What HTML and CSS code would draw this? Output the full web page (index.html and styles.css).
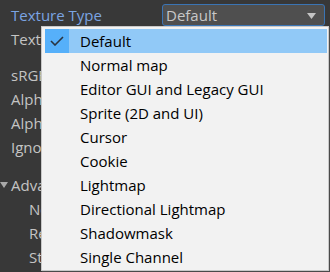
FILE: index.html
```html
<!DOCTYPE html>
<html>
<head>
<meta charset="utf-8">
<link rel="stylesheet" href="styles.css">
</head>
<body>
<div class="inspector">
  <div class="row">
    <span class="label focused">Texture Type</span>
    <div class="popup">
      <span>Default</span>
      <svg class="arrow" width="9" height="6" viewBox="0 0 9 6"><polygon points="0,0 9,0 4.5,6" fill="#c4c4c4"/></svg>
    </div>
  </div>
  <div class="row"><span class="label">Texture Shape</span></div>
  <div class="space"></div>
  <div class="row"><span class="label">sRGB (Color Texture)</span></div>
  <div class="row"><span class="label">Alpha Source</span></div>
  <div class="row"><span class="label">Alpha Is Transparency</span></div>
  <div class="row"><span class="label">Ignore PNG file gamma</span></div>
  <div class="space2"></div>
  <div class="row"><svg class="fold" width="8" height="6" viewBox="0 0 8 6"><polygon points="0,0 8,0 4,6" fill="#a8a8a8"/></svg><span class="label">Advanced</span></div>
  <div class="row indent"><span class="label">Non-Power of 2</span></div>
  <div class="row indent"><span class="label">Read/Write</span></div>
  <div class="row indent"><span class="label">Streaming Mipmaps</span></div>
</div>

<div class="menu">
  <div class="item selected">
    <div class="check"><svg width="14" height="10" viewBox="0 0 14 10"><polyline points="1,5 5,9 13,1" fill="none" stroke="#2a3440" stroke-width="1.6"/></svg></div>
    <span class="text">Default</span>
  </div>
  <div class="item"><div class="check"></div><span class="text">Normal map</span></div>
  <div class="item"><div class="check"></div><span class="text">Editor GUI and Legacy GUI</span></div>
  <div class="item"><div class="check"></div><span class="text">Sprite (2D and UI)</span></div>
  <div class="item"><div class="check"></div><span class="text">Cursor</span></div>
  <div class="item"><div class="check"></div><span class="text">Cookie</span></div>
  <div class="item"><div class="check"></div><span class="text">Lightmap</span></div>
  <div class="item"><div class="check"></div><span class="text">Directional Lightmap</span></div>
  <div class="item"><div class="check"></div><span class="text">Shadowmask</span></div>
  <div class="item"><div class="check"></div><span class="text">Single Channel</span></div>
</div>
</body>
</html>
```
FILE: styles.css
```css
html, body {
  margin: 0;
  padding: 0;
  width: 330px;
  height: 272px;
  overflow: hidden;
  background: #383838;
  font-family: "Open Sans", "Noto Sans", sans-serif;
  font-size: 15px;
}

.inspector {
  display: flex;
  flex-direction: column;
  padding-top: 3px;
}

.row {
  height: 24px;
  display: flex;
  align-items: center;
  padding-left: 11px;
  white-space: nowrap;
}

.row.indent {
  padding-left: 29px;
}

.space { height: 12px; }
.space2 { height: 14px; }

.label {
  color: #c4c4c4;
  line-height: 24px;
}

.label.focused {
  color: #7ba4e2;
  width: 151px;
}

.fold {
  flex: none;
  margin-left: -11px;
  margin-right: 3px;
}

.popup {
  box-sizing: border-box;
  width: 163px;
  height: 22px;
  border: 1px solid #3a74b4;
  border-radius: 3px;
  background: #4f4f4f;
  display: flex;
  align-items: center;
  justify-content: space-between;
  padding: 0 8px 0 3px;
  color: #c8c8c8;
}

.popup .arrow {
  margin-top: 1px;
}

.menu {
  position: absolute;
  left: 41px;
  top: 26px;
  width: 288px;
  height: 245px;
  box-sizing: border-box;
  background: #f2f2f2;
  border: 1px solid #c8c8c8;
  padding: 2px 1px 2px 3px;
  display: flex;
  flex-direction: column;
  box-shadow: 1px 1px 0 #4a4a4a;
}

.item {
  height: 24px;
  display: flex;
  align-items: center;
  color: #000;
}

.item.selected {
  background: #91c9f7;
}

.check {
  width: 24px;
  height: 24px;
  display: flex;
  align-items: center;
  justify-content: center;
}

.item.selected .check {
  background: #56b0fa;
}

.text {
  padding-left: 11px;
  white-space: nowrap;
}
```
